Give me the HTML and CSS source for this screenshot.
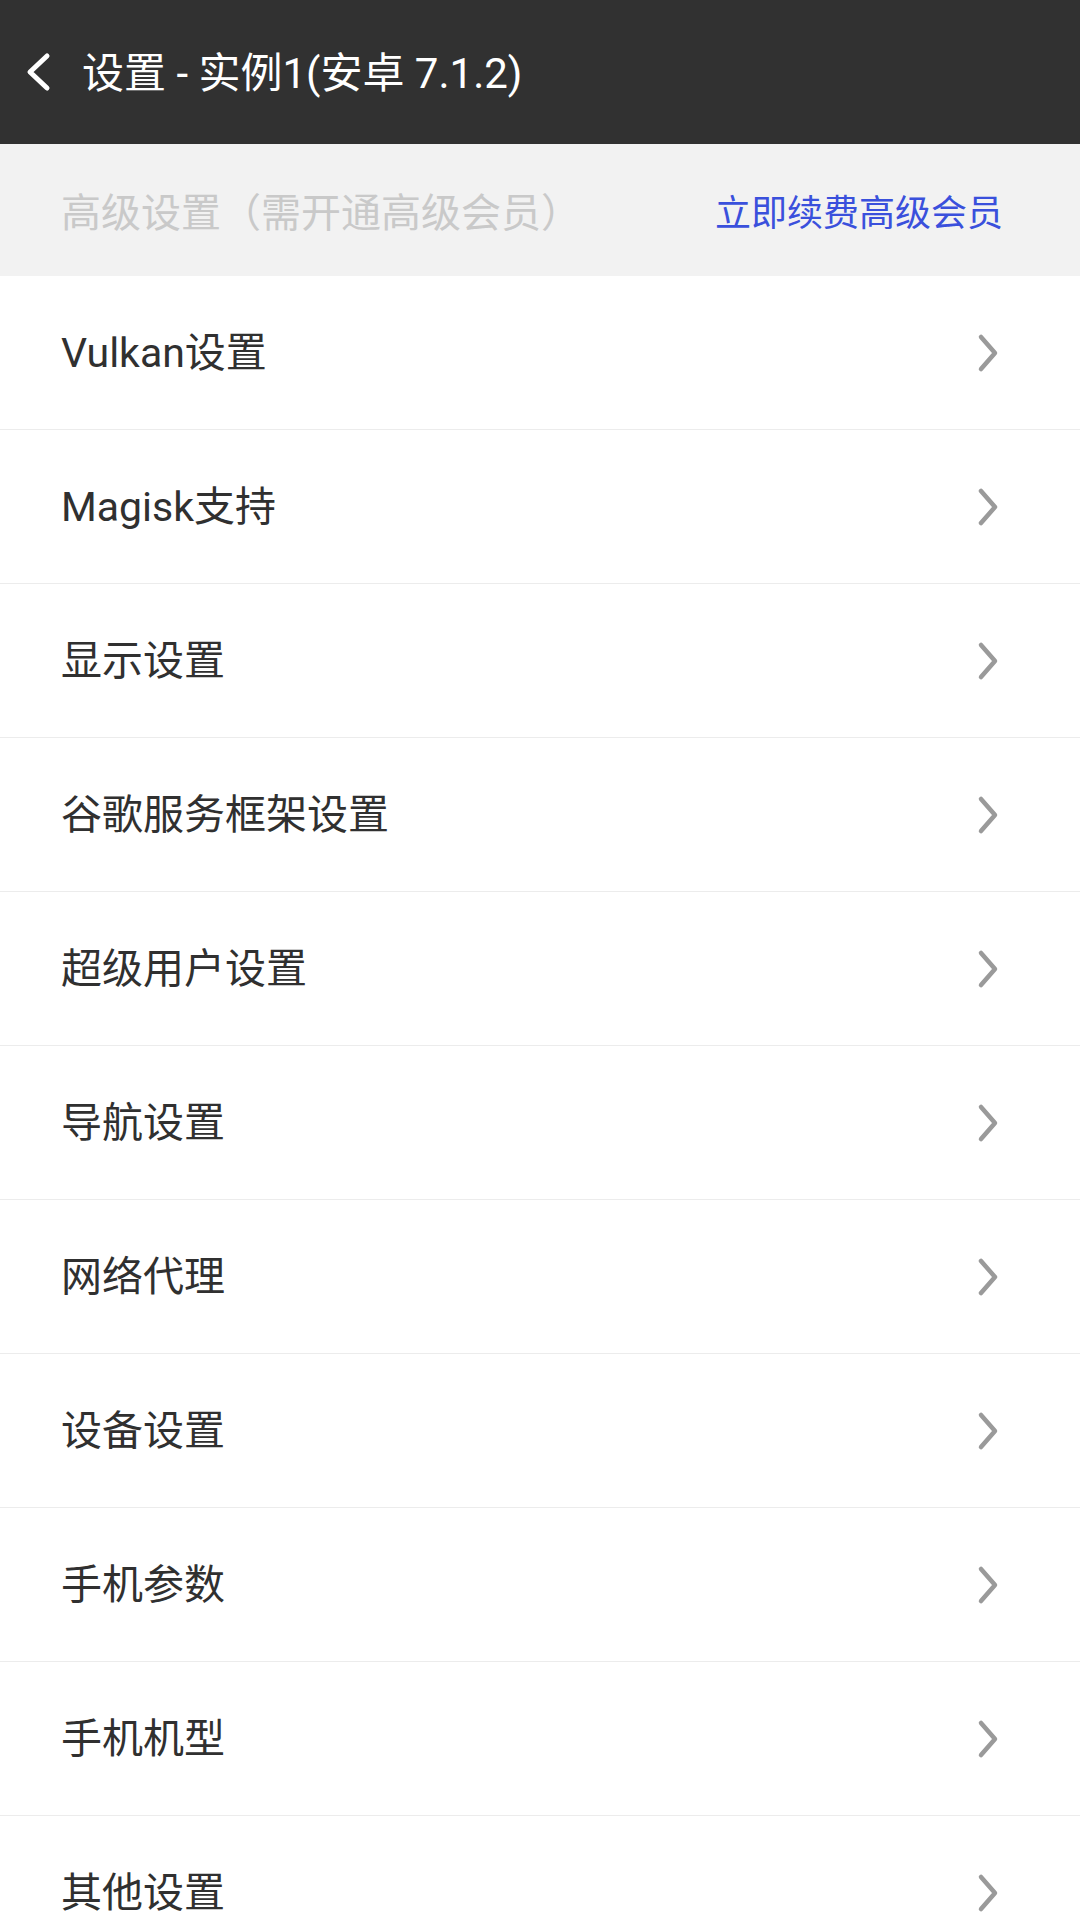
FILE: index.html
```html
<!DOCTYPE html>
<html lang="zh-CN">
<head>
<meta charset="utf-8">
<title>设置</title>
<link rel="stylesheet" href="styles.css">
</head>
<body>
<div class="screen">
  <header class="appbar">
    <svg class="back" width="28" height="40" viewBox="0 0 28 40"><path d="M23 4 L6 20 L23 36" fill="none" stroke="#fff" stroke-width="5" stroke-linecap="round" stroke-linejoin="round"/></svg>
    <h1 class="title">设置 - 实例1(安卓 7.1.2)</h1>
  </header>
  <div class="section">
    <span class="section-label">高级设置（需开通高级会员）</span>
    <span class="section-link">立即续费高级会员</span>
  </div>
  <ul class="list">
    <li class="row"><span class="label">Vulkan设置</span><svg class="chev" width="24" height="40" viewBox="0 0 24 40"><path d="M5 4 L19 20 L5 36" fill="none" stroke="#9a9a9a" stroke-width="4.5" stroke-linecap="round" stroke-linejoin="round"/></svg></li>
    <li class="row"><span class="label">Magisk支持</span><svg class="chev" width="24" height="40" viewBox="0 0 24 40"><path d="M5 4 L19 20 L5 36" fill="none" stroke="#9a9a9a" stroke-width="4.5" stroke-linecap="round" stroke-linejoin="round"/></svg></li>
    <li class="row"><span class="label">显示设置</span><svg class="chev" width="24" height="40" viewBox="0 0 24 40"><path d="M5 4 L19 20 L5 36" fill="none" stroke="#9a9a9a" stroke-width="4.5" stroke-linecap="round" stroke-linejoin="round"/></svg></li>
    <li class="row"><span class="label">谷歌服务框架设置</span><svg class="chev" width="24" height="40" viewBox="0 0 24 40"><path d="M5 4 L19 20 L5 36" fill="none" stroke="#9a9a9a" stroke-width="4.5" stroke-linecap="round" stroke-linejoin="round"/></svg></li>
    <li class="row"><span class="label">超级用户设置</span><svg class="chev" width="24" height="40" viewBox="0 0 24 40"><path d="M5 4 L19 20 L5 36" fill="none" stroke="#9a9a9a" stroke-width="4.5" stroke-linecap="round" stroke-linejoin="round"/></svg></li>
    <li class="row"><span class="label">导航设置</span><svg class="chev" width="24" height="40" viewBox="0 0 24 40"><path d="M5 4 L19 20 L5 36" fill="none" stroke="#9a9a9a" stroke-width="4.5" stroke-linecap="round" stroke-linejoin="round"/></svg></li>
    <li class="row"><span class="label">网络代理</span><svg class="chev" width="24" height="40" viewBox="0 0 24 40"><path d="M5 4 L19 20 L5 36" fill="none" stroke="#9a9a9a" stroke-width="4.5" stroke-linecap="round" stroke-linejoin="round"/></svg></li>
    <li class="row"><span class="label">设备设置</span><svg class="chev" width="24" height="40" viewBox="0 0 24 40"><path d="M5 4 L19 20 L5 36" fill="none" stroke="#9a9a9a" stroke-width="4.5" stroke-linecap="round" stroke-linejoin="round"/></svg></li>
    <li class="row"><span class="label">手机参数</span><svg class="chev" width="24" height="40" viewBox="0 0 24 40"><path d="M5 4 L19 20 L5 36" fill="none" stroke="#9a9a9a" stroke-width="4.5" stroke-linecap="round" stroke-linejoin="round"/></svg></li>
    <li class="row"><span class="label">手机机型</span><svg class="chev" width="24" height="40" viewBox="0 0 24 40"><path d="M5 4 L19 20 L5 36" fill="none" stroke="#9a9a9a" stroke-width="4.5" stroke-linecap="round" stroke-linejoin="round"/></svg></li>
    <li class="row"><span class="label">其他设置</span><svg class="chev" width="24" height="40" viewBox="0 0 24 40"><path d="M5 4 L19 20 L5 36" fill="none" stroke="#9a9a9a" stroke-width="4.5" stroke-linecap="round" stroke-linejoin="round"/></svg></li>
  </ul>
</div>
</body>
</html>
```

FILE: styles.css
```css
html, body {
  margin: 0;
  padding: 0;
  background: #ffffff;
}
body {
  font-family: "Roboto", "Noto Sans CJK SC", sans-serif;
}
.screen {
  width: 1080px;
  height: 1920px;
  overflow: hidden;
  display: flex;
  flex-direction: column;
}
.appbar {
  flex: 0 0 144px;
  height: 144px;
  background: #313131;
  display: flex;
  align-items: center;
  padding-left: 24px;
  box-sizing: border-box;
}
.back {
  display: block;
}
.title {
  margin: 4px 0 0 30px;
  font-size: 42px;
  font-weight: 400;
  color: #ffffff;
  line-height: 1;
}
.section {
  flex: 0 0 132px;
  height: 132px;
  background: #f2f2f2;
  display: flex;
  align-items: center;
  justify-content: space-between;
  padding: 0 77px 0 61px;
  box-sizing: border-box;
}
.section-label {
  font-size: 40px;
  color: #c9c9c9;
}
.section-link {
  font-size: 36px;
  color: #3a50dc;
}
.list {
  list-style: none;
  margin: 0;
  padding: 0;
}
.row {
  height: 153px;
  border-bottom: 1px solid #ececec;
  display: flex;
  align-items: center;
  justify-content: space-between;
  padding: 0 80px 0 61px;
}
.label {
  font-size: 41px;
  color: #303030;
  margin-bottom: 7px;
}
.chev {
  display: block;
}
```
